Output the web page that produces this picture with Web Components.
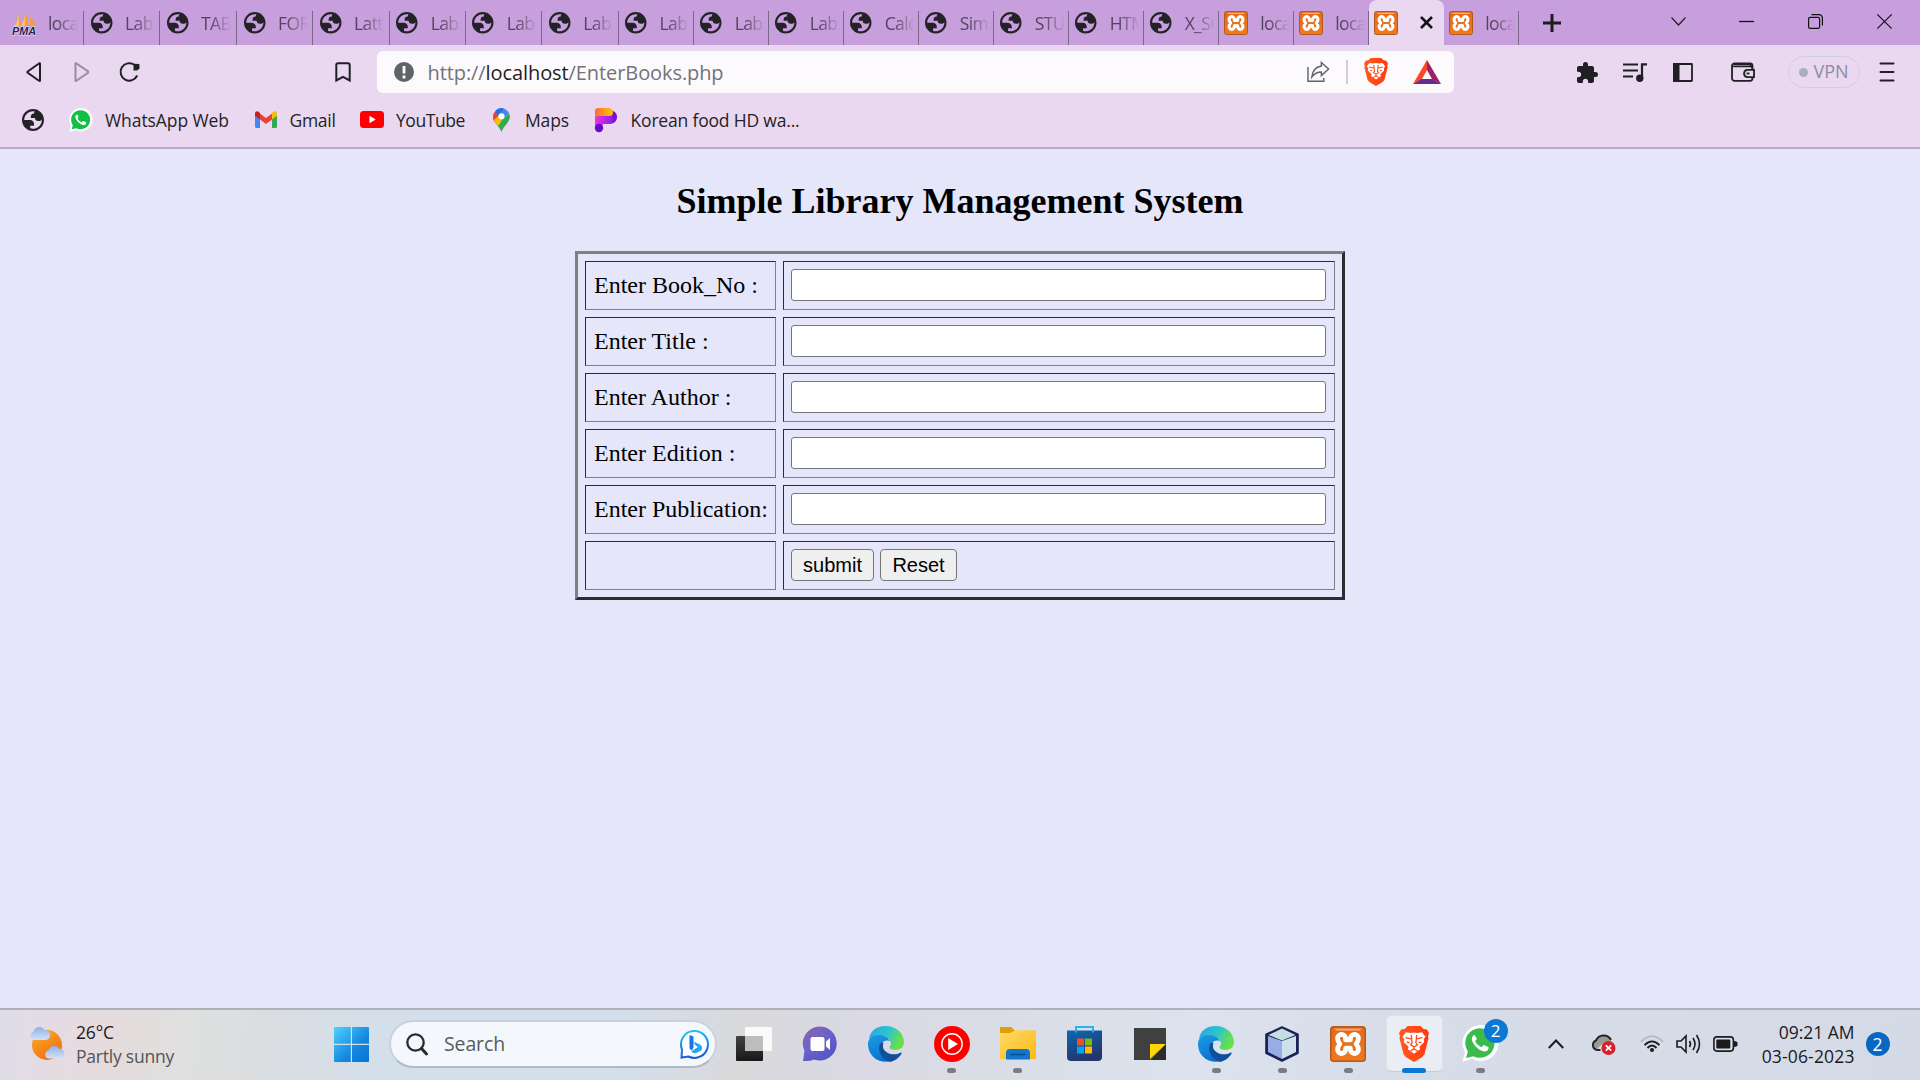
<!DOCTYPE html>
<html lang="en">
<head>
<meta charset="utf-8">
<title>Library Management</title>
<style>
html,body{margin:0;height:1080px;overflow:hidden;background:#e6e6fa}
</style>
</head>
<body>
<desk-screen></desk-screen>
<script>
const UI = '"Open Sans","Noto Sans",sans-serif';
const xampp = `<defs><linearGradient id="xa" x1="0" y1="0" x2="0" y2="1"><stop offset="0" stop-color="#e06a1c"/><stop offset="1" stop-color="#ef7a1f"/></linearGradient></defs><rect x=".5" y=".5" width="23" height="23" rx="2" fill="url(#xa)" stroke="#b35a1a"/><path d="M2.5 1.8h19l-2 1.2h-15z" fill="#f6b184"/><path d="M12 9.300H10.400C10.700 5.900 7.800 5 6.300 6 4.400 7.200 4.800 9.600 6.600 12 4.600 14.300 4.600 16.700 6.300 17.900 8.200 19 10.600 17.800 10.500 14.700H13.500C13.400 17.800 15.800 19 17.700 17.900 19.400 16.700 19.400 14.300 17.400 12 19.200 9.600 19.600 7.200 17.700 6 16.200 5 13.300 5.900 13.600 9.300z" fill="none" stroke="#fff" stroke-width="3.200" stroke-linecap="round" stroke-linejoin="round"/>`;
const edge = `<defs><linearGradient id="e1" x1="0" y1="0" x2="1" y2=".35"><stop offset="0" stop-color="#2aa4e8"/><stop offset=".55" stop-color="#2cc3cf"/><stop offset="1" stop-color="#6ae048"/></linearGradient><linearGradient id="e2" x1="0" y1="0" x2=".5" y2="1"><stop offset="0" stop-color="#1b9de2"/><stop offset="1" stop-color="#0a6fd0"/></linearGradient></defs><path d="M1 13C2 6 7 0 18 0s18 8 18 16c0 5-3.500 8-8.500 8-3.500 0-6-1-6-2.500 0-1 1.500-1.500 1.500-4 0-3-2-5.500-7-6.500C9 10 3 11 1 13z" fill="url(#e1)"/><path d="M0 18C0 12 5 8.500 11 9c6 .4 10 3.500 11.500 7-2-2.300-8-2-9 3-.8 6 5 14 12 15.500C12 39 0 31 0 18z" fill="url(#e2)"/><path d="M12 18c-3 7 2 16 10 17.700 5-.5 9-4 11.500-8 .5-1-.3-1.500-1-1-4 2-9 2.300-13 0-4-2.300-5.500-6-4-10-1.500 0-2.800.4-3.500 1.300z" fill="#0f4f9c"/>`;
const lion = `<defs><linearGradient id="br" x1="0" y1="0" x2="1" y2="0"><stop offset="0" stop-color="#ff5a1f"/><stop offset="1" stop-color="#ff3a10"/></linearGradient></defs><path d="M8.500 0h13L24.500 3 28 3.500l2 4-1 3 .5 2-4 16.500-2.500 3.200L15 37l-8-4.800L4.500 29 .5 12.500l.5-2-1-3 2-4L5.500 3z" fill="url(#br)"/><path d="M7 6.500l4.500.7L15 6.600l3.500.6 4.500-.7 3.500 4.500-1.800 2.500.5 3-3.500 3.500-1.200 1.200.6 3-2.300 1.300L15 28.500l-3.800-3-2.300-1.300.6-3L8.300 20 4.800 16.500l.5-3L3.500 11z" fill="#fff"/><path d="M6.500 12l5.500 1.300M23.500 12 18 13.300M12.300 9.300l.8 8-1.400 2 3.300 2.200 3.300-2.200-1.400-2 .8-8M15 21.500v2l-3.300 2M15 23.500l3.300 2M7.500 16.500l3 .5M22.500 16.500l-3 .5" fill="none" stroke="#ff4a16" stroke-width="1.300"/><path d="M11 30h8l-4 3z" fill="#ff4a16"/>`;
const wa = (c)=>`<path d="M.5 35.500l2.400-9A17.500 17.500 0 1 1 10 33.200z" fill="#fff"/><path d="M4 32l1.700-6.300A14.300 14.300 0 1 1 11 30.300z" fill="${c}"/><path d="M12.600 10c-.7-.3-1.600 0-2.300 1-1 1.600-1 3.700.3 6 2.300 4.300 5.500 7.200 10 8.500 2.300.6 4.300-.3 5-2 .4-1 .3-1.800-.2-2.100l-3.600-1.800c-.6-.2-1 0-1.400.5l-1.200 1.500c-3-1.200-5-3-6.400-5.700l1.200-1.500c.3-.5.3-.9.1-1.400z" fill="#fff"/>`;
const ICONS = {
 globe:['2 2 20 20',`<path fill="#222227" fill-rule="evenodd" d="M12 2C6.480 2 2 6.480 2 12s4.480 10 10 10 10-4.480 10-10S17.520 2 12 2zM4 12h4.400c3.407.022 4.922 1.730 4.543 5.127H9.488v2.470a8.004 8.004 0 0 0 10.498-8.083C19.327 12.504 18.332 13 17 13c-2.137 0-3.206-.916-3.206-2.750h-3.748c-.274-2.728.683-4.092 2.870-4.092 0-.975.327-1.597.811-1.970A8.004 8.004 0 0 0 4 12z"/>`],
 pma:['0 0 24 24',`<path d="M2 15C4 12 6 7 7 2l2 13zM9 15C12 10 13 5 13.500 0l3 15zM17 15c1.500-3 1.500-6 .5-10 2.500 3 4.500 6 6 9.500z" fill="#fb9c2c"/><path d="M2 15C5 12 6 7 7 2v13zM9 15C12 10 13 5 13.500 0l-.5 15z" fill="#fcc06a"/><text x="0" y="23.500" font-family="Liberation Sans" font-weight="700" font-style="italic" font-size="10" textLength="24" lengthAdjust="spacingAndGlyphs" fill="#26235a" stroke="#eee" stroke-width=".8" paint-order="stroke">PMA</text>`],
 xampp:['0 0 24 24',xampp],
 x:['0 0 13 13','<path d="M1 1l11 11M12 1 1 12" stroke="#111" stroke-width="2.500"/>'],
 plus:['0 0 18 18','<path d="M9 0v18M0 9h18" stroke="#1d1d20" stroke-width="3"/>'],
 chev:['0 0 15 9','<path d="M.5.5l7 7.500L14.500.5" fill="none" stroke="#222" stroke-width="1.200"/>'],
 min:['0 0 15 2','<path d="M0 .5h15" stroke="#111" stroke-width="1.300"/>'],
 restore:['0 0 15 15','<rect x=".6" y="3.400" width="11" height="11" rx="1.500" fill="none" stroke="#111" stroke-width="1.200"/><path d="M3.500.6H11a3.400 3.400 0 0 1 3.400 3.400v7.500" fill="none" stroke="#111" stroke-width="1.200"/>'],
 close:['0 0 15 15','<path d="M.3.3l14.400 14.400M14.700.3.3 14.700" stroke="#111" stroke-width="1.200"/>'],
 back:['0 0 16 20','<path d="M14 1.500v17q0 .7-1 .2L1.700 10.800q-.7-.7 0-1.400L13 1.500q1-.5 1 0z" fill="none" stroke="#202024" stroke-width="2"/>'],
 fwd:['0 0 16 20','<path d="M1.500 1.500v17q0 .7 1 .2L14 10.700q.7-.7 0-1.400L2.500 1.500q-1-.5-1 0z" fill="none" stroke="#998ba0" stroke-width="2"/>'],
 reload:['0 0 21 20','<path d="M15.300 2.800A8.700 8.700 0 1 0 18.200 13.500" fill="none" stroke="#202024" stroke-width="2"/><path d="M14.500 1.800l5.800.3.300 4.500-2.500 2h-3.600z" fill="#202024"/>'],
 bookmark:['0 0 16 20','<path d="M1.300 3q0-1.800 1.800-1.800h9.800q1.800 0 1.800 1.800v15.500L8 14.800 1.300 18.500z" fill="none" stroke="#202024" stroke-width="2"/>'],
 info:['0 0 20 20','<circle cx="10" cy="10" r="10" fill="#5f6368"/><path d="M10 4v7.500M10 13.500v3" stroke="#fff" stroke-width="2.800"/>'],
 share:['0 0 24 22','<path d="M1 6v14.300h16.500V17" fill="none" stroke="#5f6368" stroke-width="1.500"/><path d="M15 1.500 22.500 8 15 14.500V11q-6 0-10 5 1-9.500 10-11z" fill="none" stroke="#5f6368" stroke-width="1.500"/>'],
 lion:['0 0 30 37',lion],
 bat:['0 0 28 24','<path d="M14 0 0 24l9-5 5-9z" fill="#ff4724"/><path d="M14 0l14 24-9-5-5-9z" fill="#9e1f63"/><path d="M0 24h28l-8.500-5h-11z" fill="#662d91"/>'],
 puzzle:['2 1 21 21','<path fill="#202024" d="M20.500 11H19V7c0-1.100-.9-2-2-2h-4V3.500a2.500 2.500 0 0 0-5 0V5H4c-1.100 0-1.990.9-1.990 2v3.800H3.500c1.490 0 2.700 1.210 2.700 2.700s-1.210 2.700-2.700 2.700H2V20c0 1.100.9 2 2 2h3.800v-1.500c0-1.490 1.210-2.700 2.700-2.700 1.490 0 2.700 1.210 2.700 2.700V22H17c1.100 0 2-.9 2-2v-4h1.500a2.500 2.500 0 0 0 0-5z"/>'],
 music:['0 0 24 19','<path d="M0 1.500h15M0 7.500h15M0 13.500h10M19 15V1.300h5" fill="none" stroke="#202024" stroke-width="2.200"/><circle cx="16.800" cy="15.200" r="3.700" fill="#202024"/>'],
 sidebar:['0 0 20 19','<rect x="1" y="1" width="18" height="17" rx=".5" fill="none" stroke="#202024" stroke-width="1.800"/><path d="M0 0h6.500v19H0z" fill="#202024"/>'],
 wallet:['0 0 24 20','<rect x="1" y="1.500" width="20.500" height="17.300" rx="2.500" fill="none" stroke="#202024" stroke-width="1.800"/><path d="M2 4.500h18M3 2.500h16l2.500 4" stroke="#202024" stroke-width="1.600" fill="none"/><path d="M23 7.800h-7a3.800 3.800 0 0 0 0 7.400h7z" fill="#e9d8ef" stroke="#202024" stroke-width="1.800"/><path d="M15.500 11.500h3" stroke="#202024" stroke-width="1.800"/>'],
 menu:['0 0 14 20','<path d="M.5 1.500h13M.5 10h13M.5 18.500h13" stroke="#202024" stroke-width="2" stroke-linecap="round"/>'],
 waw:['0 0 36 36',wa('#12bf45')],
 wat:['0 0 36 36',wa('#3bbb4b')],
 gmail:['0 0 22 17','<path d="M0 2v13.500Q0 17 1.500 17H5V7z" fill="#4285f4"/><path d="M22 2v13.500q0 1.500-1.500 1.500H17V7z" fill="#34a853"/><path d="M5 2.500 11 7l6-4.500V8.500L11 13 5 8.500z" fill="#ea4335"/><path d="M0 2.500C0 .3 2 -.5 3.600.8L5 2v6.500L0 4.800z" fill="#c5221f"/><path d="M22 2.500C22 .3 20-.5 18.400.8L17 2v6.500l5-3.700z" fill="#fbbc04"/>'],
 yt:['0 0 24 17','<rect width="24" height="17" rx="3.500" fill="#f00"/><path d="M9.500 4.800v7.400l6.200-3.700z" fill="#fff"/>'],
 maps:['0 0 17 24','<path d="M8.500 24C7.500 20 1 15 .3 9.500L9 8l7.700 0c.6 6-7 11-8.200 16z" fill="#34a853"/><path d="M2.500 3A8.300 8.300 0 0 0 2 14.500L11 5z" fill="#ea4335"/><path d="M1 12c.8 2 2.500 4 4 6L14 7.500 8 6z" fill="#fbbc04"/><path d="M2.300 3A8.400 8.400 0 0 1 16 5L8.500 13l-1-5z" fill="#4285f4"/><path d="M2.300 3A8.400 8.400 0 0 1 11 .4L5 7.500z" fill="#1a73e8"/><path d="M16 5c1.500 3.500.2 7-2 9.500L7 15l6-7z" fill="#34a853"/><circle cx="8.500" cy="8.300" r="3.100" fill="#fff"/>'],
 pp:['0 0 24 24','<defs><linearGradient id="p1"><stop offset="0" stop-color="#ff6a3c"/><stop offset="1" stop-color="#ffc400"/></linearGradient><linearGradient id="p2"><stop offset="0" stop-color="#f032e6"/><stop offset="1" stop-color="#8a1be0"/></linearGradient></defs><path d="M14 2c6 0 9 3 9 7s-3 7-8 7z" fill="#7a10d8"/><path d="M1 7h18v5q-1 4-6 4H9.500l-2 2-6.500 2z" fill="url(#p2)"/><path d="M1 3q0-3 3-3h11q4 1 4 4.500T15 8H4q-2 0-3 2z" fill="url(#p1)"/><circle cx="5" cy="20" r="4.200" fill="#6a0ad0"/>'],
 weather:['0 0 37 34','<defs><linearGradient id="su" x1="0" y1="0" x2=".6" y2="1"><stop offset="0" stop-color="#f9b32c"/><stop offset="1" stop-color="#f26d10"/></linearGradient><linearGradient id="cl" x1="0" y1="0" x2="0" y2="1"><stop offset="0" stop-color="#8fb0e6"/><stop offset="1" stop-color="#d3e2f8"/></linearGradient></defs><circle cx="18" cy="18" r="15" fill="url(#su)"/><path d="M5 13a4.500 4.500 0 0 1-.5-8.500A6 6 0 0 1 15.500 3a4.500 4.500 0 0 1 1.500 10z" fill="url(#cl)"/><path d="M19.500 31.500a4.200 4.200 0 0 1 0-8.200 5.800 5.800 0 0 1 10.700-1.500 5 5 0 0 1 1.800 9.700z" fill="url(#cl)"/>'],
 win:['0 0 35 35','<defs><linearGradient id="wi" gradientUnits="userSpaceOnUse" x1="0" y1="0" x2="35" y2="35"><stop offset="0" stop-color="#4fd3fd"/><stop offset=".6" stop-color="#1487e0"/><stop offset="1" stop-color="#0a74d2"/></linearGradient></defs><path d="M1 0h15.800v16.800H0V1q0-1 1-1zM18 0h16q1 0 1 1v15.800H18zM0 18h16.800v17H1q-1 0-1-1zM18 18h17v16q0 1-1 1H18z" fill="url(#wi)"/>'],
 search:['0 0 22 22','<circle cx="9.500" cy="9.500" r="8.200" fill="none" stroke="#2a2a2c" stroke-width="2.300"/><path d="M15.500 15.500l5 5.500" stroke="#2a2a2c" stroke-width="3" stroke-linecap="round"/>'],
 bing:['0 0 30 30','<defs><linearGradient id="bi" x1=".3" y1="0" x2=".5" y2="1"><stop offset="0" stop-color="#25c3ee"/><stop offset="1" stop-color="#1b57d2"/></linearGradient></defs><path d="M1.500 28.500l.5-8A13.500 13.500 0 1 1 8.500 27.500z" fill="#fafcff" stroke="url(#bi)" stroke-width="2"/><path d="M9.500 6l4 1.500v11l-1.500 3q-2.500-1-2.500-3z" fill="#1d74e6"/><path d="M13.500 12.500l7 3.200q3 3 .5 6l-5.500 2.500q-3 .5-4-2l6.500-4.200-2.500-1.500z" fill="#28a8ec"/>'],
 task:['0 0 36 34','<defs><linearGradient id="ta" x1="0" y1="0" x2="0" y2="1"><stop offset="0" stop-color="#434343"/><stop offset="1" stop-color="#181818"/></linearGradient></defs><rect y="9" width="27" height="25" rx="1" fill="url(#ta)"/><rect x="9" y="0" width="27" height="24" rx="1" fill="#fff" opacity=".85"/><path d="M9 9h18v15H9z" fill="#b9b9b9" opacity=".9"/>'],
 chat:['0 0 34 34','<defs><linearGradient id="ch" x1="0" y1="0" x2=".7" y2="1"><stop offset="0" stop-color="#8e65ab"/><stop offset=".5" stop-color="#6a63c8"/><stop offset="1" stop-color="#5454c6"/></linearGradient></defs><path d="M0 34l1.500-10A17 17 0 1 1 11 32.500q-3 1.500-11 1.500z" fill="url(#ch)"/><rect x="7.500" y="10" width="14" height="14" rx="2" fill="#fff"/><path d="M23 14.500l4-3.500v12l-4-3.500z" fill="#fff"/>'],
 edge:['0 0 36 36',edge],
 ytm:['0 0 36 36','<circle cx="18" cy="18" r="18" fill="#f00"/><circle cx="18" cy="18" r="10.200" fill="none" stroke="#fff" stroke-width="1.400"/><path d="M14.200 12v12l9.800-6z" fill="#fff"/>'],
 folder:['0 0 36 33','<defs><linearGradient id="fo" x1="0" y1="0" x2="1" y2="1"><stop offset="0" stop-color="#ffdb69"/><stop offset="1" stop-color="#fbb913"/></linearGradient></defs><path d="M0 1q0-1 1-1h10l4 3.500V8H0z" fill="#e0a100"/><path d="M0 6h10.500L15 3.200h21V32H0z" fill="url(#fo)"/><path d="M6 32.500V26q0-4 4-4h16q4 0 4 4v6.500z" fill="#1277cc"/><path d="M10.500 27.500h15" stroke="#0d4f93" stroke-width="1.600"/>'],
 store:['0 0 35 35','<defs><linearGradient id="st" x1="0" y1="0" x2=".4" y2="1"><stop offset="0" stop-color="#0c68b6"/><stop offset="1" stop-color="#24366a"/></linearGradient></defs><path d="M9 7V1h17v6" fill="none" stroke="#28b2ee" stroke-width="2"/><path d="M0 4.500h35V31q0 4-4 4H4q-4 0-4-4z" fill="url(#st)"/><path d="M10 12.500h7v7h-7z" fill="#f25022"/><path d="M18 12.500h7v7h-7z" fill="#7fba00"/><path d="M10 20.500h7v7h-7z" fill="#00a4ef"/><path d="M18 20.500h7v7h-7z" fill="#ffb900"/><path d="M9 4.500V6.500M26 4.500V6.500" stroke="#28b2ee" stroke-width="2"/>'],
 notes:['0 0 32 32','<path d="M0 0h32v16L16 32H0z" fill="#404040"/><path d="M16 16h16L16 31z" fill="#ffd60a"/><path d="M32 16v16H16z" fill="#2c2c2c"/>'],
 cube:['0 0 34 36','<path d="M17 1.200 32.800 8.500v18.500L17 34.800 1.200 27V8.500z" fill="#1c2258" stroke="#1c2258" stroke-width="2" stroke-linejoin="round"/><path d="M17 2.500 30.500 9 17 14.500 3.500 9z" fill="#c3dfdf"/><path d="M3 10l14 5v18L3 26z" fill="#96aee4"/><path d="M31 10l-14 5v18l14-7z" fill="#d0dfec"/>'],
 up:['0 0 16 10','<path d="M.8 9 8 1.500 15.200 9" fill="none" stroke="#1c1c1e" stroke-width="2"/>'],
 cloud:['0 0 25 21','<path d="M6.500 15.500A5 5 0 0 1 5 6.500 8 8 0 0 1 18.500 5l2 3v8z" fill="#9a9a98"/><path d="M6 15q6-7 14-8v9H6z" fill="#d8d6d4"/><path d="M9.500 16H6A5 5 0 0 1 5 6.500 8.300 8.300 0 0 1 20 6" fill="none" stroke="#252525" stroke-width="2"/><circle cx="17.500" cy="14" r="7" fill="#d8202a"/><path d="M14.800 11.300l5.400 5.400M20.200 11.300l-5.400 5.400" stroke="#fff" stroke-width="1.700"/>'],
 wifi:['0 0 24 18','<path d="M1 7Q12-4.500 23 7" fill="none" stroke="#b1b4be" stroke-width="1.600"/><path d="M4.500 10.200Q12 2.500 19.500 10.200M7.500 13Q12 8 16.500 13" fill="none" stroke="#1c1c1e" stroke-width="1.900"/><circle cx="12" cy="15" r="2" fill="#1c1c1e"/>'],
 vol:['0 0 25 20','<path d="M1 7h4l5-5v16l-5-5H1z" fill="none" stroke="#1c1c1e" stroke-width="1.600"/><path d="M13.500 7q2 3 0 6M17 4q4 6 0 12M20.500 1q6 9 0 18" fill="none" stroke="#1c1c1e" stroke-width="1.600"/>'],
 bat2:['0 0 24 16','<rect x=".9" y=".9" width="19.500" height="14.200" rx="3" fill="none" stroke="#1c1c1e" stroke-width="1.600"/><rect x="3.300" y="3.500" width="14" height="9" rx="1" fill="#1c1c1e"/><path d="M21.500 5.500l2.500.8v3.400l-2.500.8z" fill="#1c1c1e" stroke="#1c1c1e"/>'],
};
function def(name, cls){ customElements.define(name, cls); }

/* <ui-icon name w h> : one inline vector icon */
def('ui-icon', class extends HTMLElement{
  connectedCallback(){
    const [vb,body]=ICONS[this.getAttribute('name')];
    const w=this.getAttribute('w'),h=this.getAttribute('h');
    this.attachShadow({mode:'open'}).innerHTML=`<style>:host{display:block;flex:none;width:${w}px;height:${h}px}svg{display:block;overflow:visible}</style><svg width="${w}" height="${h}" viewBox="${vb}" preserveAspectRatio="none">${body}</svg>`;
  }
});
/* <fit-text w> : a single line whose tracking is set so it spans w pixels */
def('fit-text', class extends HTMLElement{
  connectedCallback(){
    this.attachShadow({mode:'open'}).innerHTML='<style>:host{display:block;flex:none;white-space:nowrap}span{display:inline-block}</style><span><slot></slot></span>';
    const s=this.shadowRoot.querySelector('span'), w=+this.getAttribute('w');
    this.style.width=w+'px';
    const n=this.textContent.length;
    s.style.letterSpacing=((w-s.getBoundingClientRect().width)/n)+'px';
  }
});
def('browser-tab', class extends HTMLElement{
  connectedCallback(){
    const w=this.getAttribute('w'), ic=this.getAttribute('icon'), act=this.hasAttribute('active'), g=ic==='globe';
    this.attachShadow({mode:'open'}).innerHTML=`<style>
    :host{display:flex;box-sizing:border-box;align-items:flex-start;width:${w}px;height:45px;flex:none;padding-left:${ic==='pma'?12:(g?6:5)}px;font:17.500px/24px ${UI};color:#54435f;
      ${act?'background:#e9d8ef;border-radius:8px 8px 0 0;':'background:linear-gradient(#796689,#796689) right 11px/1.400px 34px no-repeat;'}}
    ui-icon{margin-top:${g?12:11}px}
    .t{flex:none;margin:11px 0 0 ${g?13:12}px;width:30px;overflow:hidden;white-space:nowrap;letter-spacing:-.6px;-webkit-mask:linear-gradient(90deg,#000 30%,transparent 100%);mask:linear-gradient(90deg,#000 30%,transparent 100%)}
    .x{margin:16px 0 0 22px}
    </style><ui-icon name="${ic}" w="${g?21.500:24}" h="${g?21.500:24}"></ui-icon>${act?'<ui-icon style="margin:16px 0 0 22px" name="x" w="13" h="13"></ui-icon>':'<div class="t"><slot></slot></div>'}`;
  }
});
def('tab-strip', class extends HTMLElement{
  connectedCallback(){
    const T=[['pma','loca',84.500],['globe','Labs',76],['globe','TABL',77],['globe','FORM',76],['globe','Latte',76.700],['globe','Labs',76],['globe','Labs',76.600],['globe','Labs',76.200],['globe','Labs',75.200],['globe','Labs',75],['globe','Labs',75],['globe','Calc',75],['globe','Simp',75],['globe','STUD',75],['globe','HTM',75],['globe','X_SC',75],['xampp','loca',75],['xampp','loca',74.800],['xampp',null,75.200],['xampp','loca',75]];
    this.attachShadow({mode:'open'}).innerHTML=`<style>:host{display:flex;height:45px;background:#c79fdc}
    .p{margin:13.500px 0 0 24px}</style>${T.map(([i,t,w])=>`<browser-tab icon="${i}" w="${w}" ${t?'':'active'}>${t||''}</browser-tab>`).join('')}
    <ui-icon class="p" name="plus" w="18" h="18"></ui-icon>
    <ui-icon style="margin:17px 0 0 110px" name="chev" w="15" h="9"></ui-icon>
    <ui-icon style="margin:21px 0 0 53px" name="min" w="15" h="2"></ui-icon>
    <ui-icon style="margin:14px 0 0 54px" name="restore" w="15" h="15"></ui-icon>
    <ui-icon style="margin:14px 0 0 54px" name="close" w="15" h="15"></ui-icon>`;
  }
});
def('tool-bar', class extends HTMLElement{
  connectedCallback(){
    const ic=(n,w,h,m)=>`<ui-icon name="${n}" w="${w}" h="${h}" style="margin-left:${m}px"></ui-icon>`;
    this.attachShadow({mode:'open'}).innerHTML=`<style>:host{display:flex;height:54px;align-items:center;background:#e9d8ef;font-family:${UI}}
    .url{box-sizing:border-box;display:flex;align-items:center;width:1077px;height:42px;margin-left:26px;background:#fdfafe;border-radius:6px;font-size:20px;color:#737277}
    .url b{font-weight:400;color:#1f1f23}
    .sep{width:2px;height:24px;background:#d1cfd6;margin-left:16px}
    .vpn{box-sizing:border-box;display:flex;align-items:center;width:72px;height:32px;margin-left:33px;border:1.500px solid #cfcfd9;border-radius:16px;font-size:18px;color:#8890a6}
    .vpn i{width:9px;height:9px;border-radius:50%;background:#a9adc0;margin:0 6px 0 9.500px}
    fit-text{margin-left:14px}.vpn fit-text{margin:0 0 2px}
    </style>${ic('back',16,20,26)}${ic('fwd',16,20,31.500)}${ic('reload',21,20,29)}${ic('bookmark',16,20,195)}
    <div class="url">${ic('info',20,20,17)}<fit-text w="296">http://<b>localhost</b>/EnterBooks.php</fit-text>${ic('share',23,22,583)}<div class="sep"></div>${ic('lion',24,28,16)}${ic('bat',28,24,25)}</div>
    ${ic('puzzle',21,21,123)}${ic('music',24,19,25)}${ic('sidebar',20,19,26)}${ic('wallet',24,20,38.500)}
    <div class="vpn"><i></i><fit-text w="35">VPN</fit-text></div>${ic('menu',14,20,20)}`;
  }
});
def('bookmark-bar', class extends HTMLElement{
  connectedCallback(){
    const ic=(n,w,h,m)=>`<ui-icon name="${n}" w="${w}" h="${h}" style="margin-left:${m}px"></ui-icon>`;
    const tx=(t,w,m)=>`<fit-text w="${w}" style="margin-left:${m}px">${t}</fit-text>`;
    this.attachShadow({mode:'open'}).innerHTML=`<style>:host{display:flex;box-sizing:border-box;height:50px;padding-bottom:7px;align-items:center;background:#e9d8ef;border-bottom:2px solid #b9abc5;font:17.500px/24px ${UI};color:#242327}</style>
    ${ic('globe',22,22,22)}${ic('waw',24,24,25)}${tx('WhatsApp Web',124,12)}${ic('gmail',22,17,26)}${tx('Gmail',46,12.500)}${ic('yt',24,17,24.500)}${tx('YouTube',69,12)}${ic('maps',17,24,27.500)}${tx('Maps',44,15.500)}${ic('pp',24,24,24.500)}${tx('Korean food HD wa...',169,13)}`;
  }
});
def('form-cell', class extends HTMLElement{
  connectedCallback(){
    this.attachShadow({mode:'open'}).innerHTML=`<style>:host{display:flex;box-sizing:border-box;height:49px;align-items:center;padding:0 8px 1px 7px;border:1px solid;border-color:#2b2c32 #808083 #808083 #2b2c32;font:24px/28px "Liberation Serif",serif;color:#000;white-space:pre}</style><slot></slot>`;
  }
});
def('library-form', class extends HTMLElement{
  connectedCallback(){
    const L=['Enter Book_No :','Enter Title :','Enter Author :','Enter Edition :','Enter Publication:'];
    this.attachShadow({mode:'open'}).innerHTML=`<style>
    :host{display:flex;flex-direction:column;align-items:center;height:859px;background:#e6e6fa}
    h2{margin:30px 0 0;font:700 36px/44px "Liberation Serif",serif;color:#000}
    form{box-sizing:border-box;display:grid;grid-template-columns:191px 552px;gap:7px;width:770px;margin-top:28px;padding:7px;border:3px solid;border-color:#808083 #2b2c2f #2b2c2f #808083}
    input{box-sizing:border-box;width:535px;height:32px;margin:0;padding:1px 2px;border:1px solid #767676;border-radius:3px;background:#fff;outline:0;font:20px "Liberation Sans",sans-serif}
    button{box-sizing:border-box;height:32px;margin:0 6px 0 0;padding:0;border:1px solid #767676;border-radius:4px;background:#efefef;color:#000;font:20px/28px "Liberation Sans",sans-serif}
    .s{width:83px}.r{width:77px}form-cell.l{padding-left:8px}
    </style><h2><fit-text w="567">Simple Library Management System</fit-text></h2>
    <form onsubmit="return false">${L.map(t=>`<form-cell class="l">${t}</form-cell><form-cell><input type="text" aria-label="${t}"></form-cell>`).join('')}<form-cell></form-cell><form-cell><button class="s">submit</button><button class="r" type="reset">Reset</button></form-cell></form>`;
  }
});
def('task-button', class extends HTMLElement{
  connectedCallback(){
    const g=k=>this.getAttribute(k), st=g('state');
    this.attachShadow({mode:'open'}).innerHTML=`<style>:host{position:relative;display:flex;flex:none;box-sizing:border-box;width:66.100px;height:70px;flex-direction:column;align-items:center}
    .c{box-sizing:border-box;width:57px;height:57px;margin-top:6px;display:flex;align-items:center;justify-content:center;border-radius:6px;${st==='on'?'background:#ebedf5;border:1px solid #dfe1ea;border-bottom-color:#c9ccd5':''}}
    .d{height:5px;margin-top:-4px;border-radius:3px;width:${st==='on'?24:9}px;background:${st==='on'?'#0a78d4':st==='run'?'#7b7c82':'transparent'}}
    .b{position:absolute;left:36px;top:10px;width:24px;height:24px;border-radius:50%;background:#0a78d4;color:#fff;font:17px/24px ${UI};text-align:center}
    </style><div class="c"><ui-icon name="${g('icon')}" w="${g('w')}" h="${g('h')}"></ui-icon></div><div class="d"></div>${g('badge')?`<div class="b">${g('badge')}</div>`:''}`;
  }
});
def('task-bar', class extends HTMLElement{
  connectedCallback(){
    const A=[['task',36,34],['chat',34,34],['edge',36,36],['ytm',36,36,'run'],['folder',36,33,'run'],['store',35,35],['notes',32,32],['edge',36,36,'run'],['cube',34,36,'run'],['xampp',36,36,'run'],['lion',30,36,'on'],['wat',37,37,'run',2]];
    const ic=(n,w,h,m)=>`<ui-icon name="${n}" w="${w}" h="${h}" style="margin-left:${m}px"></ui-icon>`;
    this.attachShadow({mode:'open'}).innerHTML=`<style>:host{display:flex;box-sizing:border-box;height:72px;padding-bottom:2px;border-top:2px solid #aeb0ba;align-items:center;font:17.500px/24px ${UI};color:#1b1b1d;
    background:linear-gradient(97deg,#dfdde9 0,#e6dbe0 80px,#e5dbdc 115px,#dfe0df 185px,#dadde0 270px,#d4dfea 370px,#d3dfeb 620px,#d9d9dc 735px,#dad9e5 860px,#dadde6 1000px,#dce3ee 1190px,#d6dce8 1400px,#d5dbe6 1920px)}
    .s{box-sizing:border-box;display:flex;align-items:center;width:328px;height:48px;margin:0 0 0 20px;border:2px solid #c6d2de;border-bottom-color:#b0bac6;border-radius:24px;background:#f4f7fb;font-size:19.500px;color:#5a5b5d}
    .w{margin-left:10px}
    .n{width:24px;height:24px;border-radius:50%;background:#0867c2;color:#fff;text-align:center;margin-left:11px}
    .apps{display:flex;margin-left:3.500px}
    .clk{width:94px;margin-left:24px}
    .clk fit-text{margin-left:auto}
    </style>
    ${ic('weather',37,34,29)}<div class="w"><fit-text w="38" style="color:#1b1b1d">26°C</fit-text><fit-text w="98" style="color:#545456">Partly sunny</fit-text></div>
    ${ic('win',35,35,160)}<div class="s">${ic('search',22,22,15)}<fit-text w="61" style="margin-left:16px">Search</fit-text>${ic('bing',30,30,175)}</div>
    <div class="apps">${A.map(a=>`<task-button icon="${a[0]}" w="${a[1]}" h="${a[2]}" state="${a[3]||''}" badge="${a[4]||''}"></task-button>`).join('')}</div>
    ${ic('up',16,10,34.500)}${ic('cloud',25,21,27)}${ic('wifi',24,18,23.500)}${ic('vol',25,20,12)}${ic('bat2',24,16,12)}
    <div class="clk"><fit-text w="76">09:21 AM</fit-text><fit-text w="93">03-06-2023</fit-text></div><div class="n">2</div>`;
  }
});
def('desk-screen', class extends HTMLElement{
  connectedCallback(){
    this.attachShadow({mode:'open'}).innerHTML=`<style>:host{display:flex;flex-direction:column;width:1920px;height:1080px;overflow:hidden}</style><tab-strip></tab-strip><tool-bar></tool-bar><bookmark-bar></bookmark-bar><library-form></library-form><task-bar></task-bar>`;
  }
});
</script>
</body>
</html>
